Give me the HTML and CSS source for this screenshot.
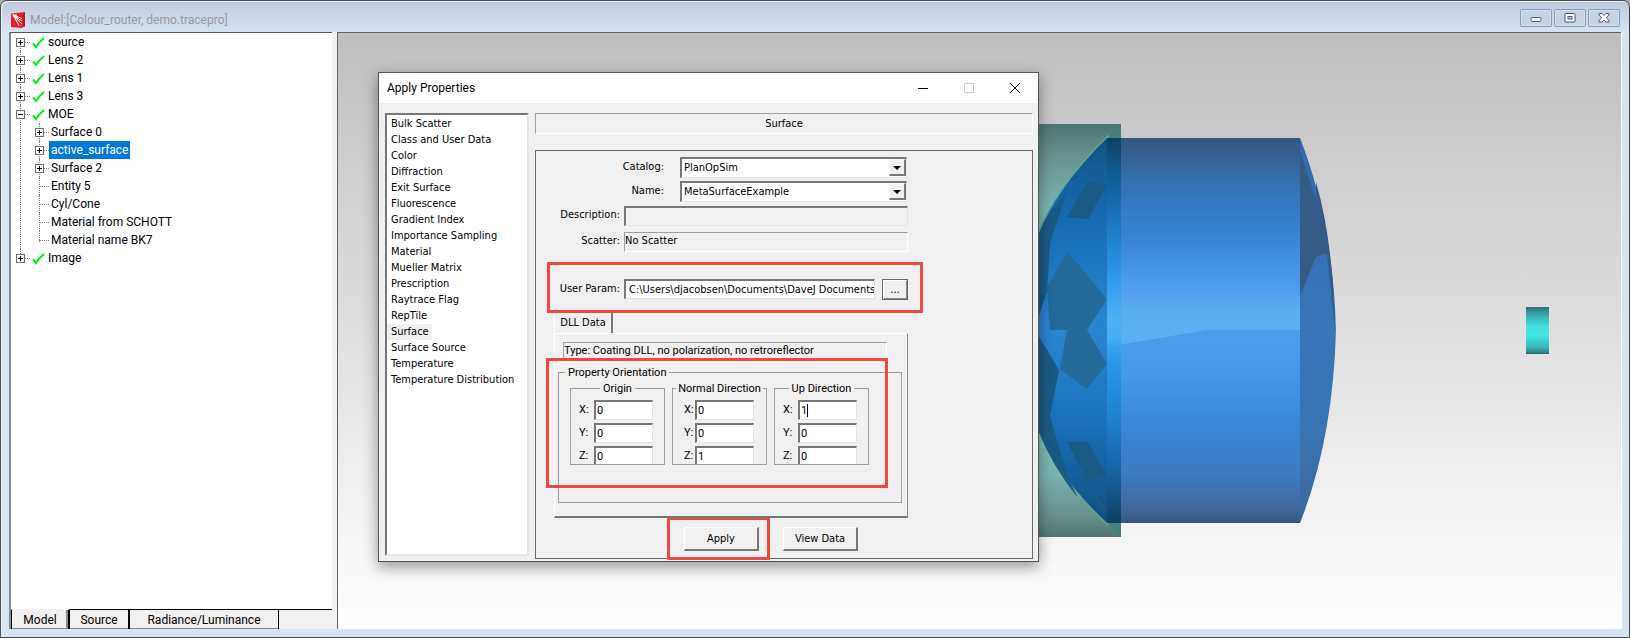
FILE: index.html
```
<!DOCTYPE html>
<html lang="en">
<head>
<meta charset="utf-8">
<title>Model:[Colour_router, demo.tracepro]</title>
<link rel="stylesheet" href="styles.css">
</head>
<body>
<svg width="0" height="0" class="defs" aria-hidden="true">
  <symbol id="check" viewBox="0 0 13 12"><path d="M1 6.5 L4 10 Q7 5 12 1" fill="none" stroke="#00f018" stroke-width="2"/></symbol>
</svg>
<main class="window">
  <header class="titlebar">
    <svg class="logo" width="16" height="16" viewBox="0 0 16 16"><path d="M1 1.500L15 0V14L12 16 1 15z" fill="#e8202c"/><path d="M13 1L15 0V14L13 15z" fill="#b81822"/><path d="M2.500 3L12 12M3 3l6 10.500M3 3l9 6M3 3l9 3.500" stroke="#fff" stroke-width=".9"/><path d="M2.500 2.500h4l1 3-2 1z" fill="#fff"/></svg>
    <h1 class="title">Model:[Colour_router, demo.tracepro]</h1>
    <div class="winbtns">
      <button class="winbtn" aria-label="Minimize"><svg width="12" height="10" viewBox="0 0 12 10"><rect x="1" y="4.500" width="10" height="4" rx="1" fill="#fff" stroke="#54586c"/></svg></button>
      <button class="winbtn" aria-label="Restore"><svg width="12" height="10" viewBox="0 0 12 10"><rect x="1" y=".5" width="10" height="8.500" rx="1" fill="#fff" stroke="#54586c"/><rect x="4" y="3.500" width="4" height="2.500" fill="#cdd9e6" stroke="#54586c"/></svg></button>
      <button class="winbtn" aria-label="Close"><svg width="12" height="10" viewBox="0 0 12 10"><path d="M1 .5h3l2 2 2-2h3v1.500L8.200 4.750 11 7.500V9H8L6 7 4 9H1V7.500l2.800-2.750L1 2z" fill="#fff" stroke="#54586c"/></svg></button>
    </div>
  </header>
  <div class="client">
    <aside class="side">
      <ul class="tree">
        <li><div class="row"><button class="exp plus" aria-label="Expand source"></button><i class="stub"></i><svg class="ck"><use href="#check"/></svg><span>source</span></div></li>
        <li><div class="row"><button class="exp plus" aria-label="Expand Lens 2"></button><i class="stub"></i><svg class="ck"><use href="#check"/></svg><span>Lens 2</span></div></li>
        <li><div class="row"><button class="exp plus" aria-label="Expand Lens 1"></button><i class="stub"></i><svg class="ck"><use href="#check"/></svg><span>Lens 1</span></div></li>
        <li><div class="row"><button class="exp plus" aria-label="Expand Lens 3"></button><i class="stub"></i><svg class="ck"><use href="#check"/></svg><span>Lens 3</span></div></li>
        <li><div class="row"><button class="exp" aria-label="Collapse MOE"></button><i class="stub"></i><svg class="ck"><use href="#check"/></svg><span>MOE</span></div>
          <ul class="sub">
            <li><div class="row"><button class="exp plus" aria-label="Expand Surface 0"></button><i class="stub"></i><span class="leaf">Surface 0</span></div></li>
            <li><div class="row"><button class="exp plus" aria-label="Expand active_surface"></button><i class="stub"></i><span class="leaf selected">active_surface</span></div></li>
            <li><div class="row"><button class="exp plus" aria-label="Expand Surface 2"></button><i class="stub"></i><span class="leaf">Surface 2</span></div></li>
            <li><div class="row"><i class="stub long"></i><span class="leaf">Entity 5</span></div></li>
            <li><div class="row"><i class="stub long"></i><span class="leaf">Cyl/Cone</span></div></li>
            <li><div class="row"><i class="stub long"></i><span class="leaf">Material from SCHOTT</span></div></li>
            <li><div class="row"><i class="stub long"></i><span class="leaf">Material name BK7</span></div></li>
          </ul>
        </li>
        <li><div class="row"><button class="exp plus" aria-label="Expand Image"></button><i class="stub"></i><svg class="ck"><use href="#check"/></svg><span>Image</span></div></li>
      </ul>
      <nav class="tabs">
        <button class="tab active">Model</button><button class="tab">Source</button><button class="tab wide">Radiance/Luminance</button>
      </nav>
    </aside>
    <section class="canvas">
      <svg class="scene" role="img" aria-label="Lens model">
        <defs>
          <linearGradient id="barrel" gradientUnits="userSpaceOnUse" x1="0" y1="138" x2="0" y2="523">
            <stop offset="0" stop-color="#34587f"/><stop offset=".04" stop-color="#365f92"/><stop offset=".1" stop-color="#336ea9"/><stop offset=".17" stop-color="#3479bf"/><stop offset=".28" stop-color="#3b88d6"/><stop offset=".37" stop-color="#4b9aec"/><stop offset=".4" stop-color="#539fee"/><stop offset=".45" stop-color="#5caeee"/><stop offset=".5" stop-color="#5bb0f0"/><stop offset="1" stop-color="#5bb0f0"/>
          </linearGradient>
          <linearGradient id="lower" gradientUnits="userSpaceOnUse" x1="0" y1="330" x2="0" y2="523">
            <stop offset="0" stop-color="#4d9ee8"/><stop offset=".25" stop-color="#4596e8"/><stop offset=".5" stop-color="#3c87d6"/><stop offset=".75" stop-color="#3c7bbf"/><stop offset=".92" stop-color="#40699d"/><stop offset="1" stop-color="#34587f"/>
          </linearGradient>
          <linearGradient id="strip" gradientUnits="userSpaceOnUse" x1="0" y1="138" x2="0" y2="523">
            <stop offset="0" stop-color="#0d4366"/><stop offset=".15" stop-color="#1569a8"/><stop offset=".28" stop-color="#1f85d4"/><stop offset=".4" stop-color="#38a2f0"/><stop offset=".47" stop-color="#4bb2f2"/><stop offset=".52" stop-color="#46aef2"/><stop offset=".55" stop-color="#2f9eeb"/><stop offset=".7" stop-color="#1f86d4"/><stop offset=".85" stop-color="#1668a8"/><stop offset="1" stop-color="#0d4163"/>
          </linearGradient>
          <linearGradient id="dome" gradientUnits="userSpaceOnUse" x1="0" y1="138" x2="0" y2="523">
            <stop offset="0" stop-color="#125384"/><stop offset=".15" stop-color="#1765a5"/><stop offset=".35" stop-color="#1f7ac2"/><stop offset=".5" stop-color="#2a86d0"/><stop offset=".75" stop-color="#1b70b6"/><stop offset="1" stop-color="#114e7e"/>
          </linearGradient>
          <linearGradient id="teal" gradientUnits="userSpaceOnUse" x1="0" y1="124" x2="0" y2="537">
            <stop offset="0" stop-color="#4d7672"/><stop offset=".08" stop-color="#67948f"/><stop offset=".2" stop-color="#7ab5b2"/><stop offset=".3" stop-color="#7fc2be"/><stop offset=".7" stop-color="#80c6c1"/><stop offset=".85" stop-color="#79b3b0"/><stop offset=".95" stop-color="#66908c"/><stop offset="1" stop-color="#52756f"/>
          </linearGradient>
          <linearGradient id="cap" gradientUnits="userSpaceOnUse" x1="0" y1="138" x2="0" y2="523">
            <stop offset="0" stop-color="#326aab"/><stop offset=".5" stop-color="#3876b8"/><stop offset=".75" stop-color="#3a75b4"/><stop offset="1" stop-color="#3c669a"/>
          </linearGradient>
          <linearGradient id="target" x1="0" y1="0" x2="0" y2="1">
            <stop offset="0" stop-color="#2e7377"/><stop offset=".2" stop-color="#37b0b1"/><stop offset=".42" stop-color="#42e0e0"/><stop offset=".6" stop-color="#44e6e4"/><stop offset=".85" stop-color="#38b7b8"/><stop offset=".96" stop-color="#308689"/><stop offset="1" stop-color="#2c6468"/>
          </linearGradient>
        </defs>
        <g transform="translate(-338 -33)">
          <path d="M960 124H1121V537H960z" fill="url(#teal)"/>
          <path d="M1121 124V138H1107zM1121 537V523H1107z" fill="#447f79"/>
          <path d="M1107 138Q1056 188 1038 236V426Q1056 475 1107 523z" fill="url(#dome)" stroke="#5da79f" stroke-width="3"/>
          <path d="M1107 138Q1056 188 1038 236V426Q1056 475 1107 523z" fill="url(#dome)"/>
          <g fill="#1a5a86">
            <path d="M1084 165L1070 181 1076 179zM1067 192L1050 243 1047 292 1038 318V236Q1048 210 1067 192z"/>
            <path d="M1088 181L1107 185 1088 219 1067 217zM1067 442H1088L1107 476 1087 480z"/>
            <path d="M1038 335L1059 370 1050 416 1067 475 1078 498Q1052 466 1038 430zM1092 487L1107 512 1098 505z"/>
          </g>
          <path d="M1067 251L1107 299 1087 330 1107 364 1087 389 1060 369 1067 330H1050L1047 288z" fill="#246a9b"/>
          <path d="M1107 138H1300V523H1107z" fill="url(#barrel)"/>
          <path d="M1107 347L1206 330H1300V523H1107z" fill="url(#lower)"/>
          <path d="M1107 138H1121V523H1107z" fill="url(#strip)"/>
          <path d="M1107 347L1121 345V352L1107 354z" fill="#329ff0"/>
          <path d="M1300 138Q1333 222 1336 330 Q1333 440 1300 523z" fill="url(#cap)"/>
          <path d="M1300 151L1316 200 1316 182Q1333 240 1335 330L1327 254 1323 254 1316 257 1300 296z" fill="#355c86"/>
          <rect x="1526" y="307" width="23" height="47" fill="url(#target)"/>
        </g>
      </svg>
      <form class="dialog">
        <header class="dlg-title">
          <h2>Apply Properties</h2>
          <button type="button" class="cap" aria-label="Minimize"><svg width="12" height="12"><path d="M1 6.500H11" stroke="#000"/></svg></button>
          <button type="button" class="cap" aria-label="Maximize" disabled><svg width="12" height="12"><path d="M1.500 1.500H10.500V10.500H1.500z" fill="none" stroke="#ccc"/></svg></button>
          <button type="button" class="cap" aria-label="Close"><svg width="12" height="12"><path d="M1 1L11 11M11 1L1 11" stroke="#000"/></svg></button>
        </header>
        <div class="dlg-body">
          <ul class="proplist">
            <li>Bulk Scatter</li><li>Class and User Data</li><li>Color</li><li>Diffraction</li><li>Exit Surface</li><li>Fluorescence</li><li>Gradient Index</li><li>Importance Sampling</li><li>Material</li><li>Mueller Matrix</li><li>Prescription</li><li>Raytrace Flag</li><li>RepTile</li><li><span class="cur">Surface</span></li><li>Surface Source</li><li>Temperature</li><li>Temperature Distribution</li>
          </ul>
          <div class="main">
            <h3 class="banner">Surface</h3>
            <div class="panel">
              <div class="field narrow"><label for="cat">Catalog:</label><div class="combo"><select id="cat"><option>PlanOpSim</option></select><i class="arrow"></i></div></div>
              <div class="field narrow second"><label for="nam">Name:</label><div class="combo"><select id="nam"><option>MetaSurfaceExample</option></select><i class="arrow"></i></div></div>
              <div class="field desc"><label for="des">Description:</label><input id="des" class="sunk gray" readonly></div>
              <div class="field scat"><label for="sca">Scatter:</label><output id="sca" class="flat">No Scatter</output></div>
              <div class="callout param">
                <div class="field"><label for="par">User Param:</label><input id="par" class="sunk path" value="C:\Users\djacobsen\Documents\DaveJ Documents\"><button type="button" class="btn dots">...</button></div>
              </div>
              <div class="tabwrap">
                <button type="button" class="dlltab">DLL Data</button>
                <div class="page">
                  <p class="flat type">Type: Coating DLL, no polarization, no retroreflector</p>
                  <fieldset class="group orient">
                    <legend>Property Orientation</legend>
                    <div class="vectors">
                      <fieldset class="group vec"><legend>Origin</legend>
                        <label><span>X:</span><input class="sunk" value="0"></label>
                        <label><span>Y:</span><input class="sunk" value="0"></label>
                        <label><span>Z:</span><input class="sunk" value="0"></label>
                      </fieldset>
                      <fieldset class="group vec tight"><legend>Normal Direction</legend>
                        <label><span>X:</span><input class="sunk" value="0"></label>
                        <label><span>Y:</span><input class="sunk" value="0"></label>
                        <label><span>Z:</span><input class="sunk" value="1"></label>
                      </fieldset>
                      <fieldset class="group vec up"><legend>Up Direction</legend>
                        <label class="editing"><span>X:</span><input class="sunk" value="1"></label>
                        <label><span>Y:</span><input class="sunk" value="0"></label>
                        <label><span>Z:</span><input class="sunk" value="0"></label>
                      </fieldset>
                    </div>
                  </fieldset>
                  <i class="mark"></i>
                </div>
              </div>
              <div class="actions">
                <div class="callout apply"><button type="button" class="btn">Apply</button></div>
                <button type="button" class="btn">View Data</button>
              </div>
            </div>
          </div>
        </div>
      </form>
    </section>
  </div>
</main>
</body>
</html>
```
FILE: styles.css
```
* { box-sizing: border-box; }
body { margin: 0; background: #aaa; font: 12px/18px Roboto, sans-serif; color: #000; }
button, input, select { font: inherit; color: inherit; margin: 0; padding: 0; border-radius: 0; }
ul { list-style: none; margin: 0; padding: 0; }
h1, h2, h3, p { margin: 0; font: inherit; }
.defs { position: absolute; }

.window { height: 100vh; display: flex; flex-direction: column; padding: 0 8px 8px; border: 1px solid #4c4a50; border-radius: 7px 7px 0 0; background: linear-gradient(#bccada, #d7e4f2 32px); box-shadow: inset 1px 1px #e8f0f8; }
.titlebar { display: flex; align-items: center; height: 31px; padding: 6px 1px 0 1px; }
.title { flex: 1; padding-left: 4px; color: #98999c; }
.winbtns { display: flex; gap: 2px; padding-bottom: 4px; }
.winbtn { width: 32px; height: 18px; display: grid; place-items: center; border: 1px solid #8b9bb9; border-radius: 2px; background: #c4d2e2; box-shadow: inset 0 0 0 1px #d3dfec; }

.client { flex: 1; min-height: 0; display: flex; gap: 5px; background: #f0f0f0; }
.side { width: 323px; display: flex; flex-direction: column; border: solid #888; border-width: 1px 0 0 2px; border-top-color: #555; background: #fff; }
.tree { flex: 1; padding: 0 0 0 5px; }
.tree li { position: relative; }
.tree li::before { content: ""; position: absolute; left: 4px; top: 0; bottom: 0; border-left: 1px dotted #808080; }
.tree > li:first-child::before { top: 10px; }
.tree li:last-child::before { bottom: auto; height: 11px; }
.row { display: flex; align-items: center; height: 18px; }
.exp { position: relative; flex: none; width: 9px; height: 9px; margin-top: 1px; border: 1px solid #707070; background: #fff; }
.exp::before, .exp.plus::after { content: ""; position: absolute; left: 1px; top: 3px; width: 5px; height: 1px; background: #000; }
.exp.plus::after { left: 3px; top: 1px; width: 1px; height: 5px; }
.stub { width: 5px; border-top: 1px dotted #808080; }
.stub.long { width: 10px; margin-left: 4px; }
.ck { width: 13px; height: 12px; margin: 2px 1px 0 2px; }
.row > span { padding: 0 2px; }
.sub { padding-left: 19px; }
.selected { background: #0078d7; color: #fff; }
.tabs { display: flex; height: 20px; background: #f0f0f0; }
.tab { width: 60px; border: solid #000; border-width: 1px 2px 0 0; background: #f0f0f0; box-shadow: inset 0 -1px #888; }
.tab.wide { width: 149px; border-right-width: 1px; }
.tab.active { width: 59px; border-top-color: #f0f0f0; border-left: 1px solid #000; box-shadow: inset -2px -1px #888; }
.tabs::after { content: ""; flex: 1; border-top: 1px solid #000; }

.canvas { flex: 1; position: relative; border: solid #666; border-width: 1px 0 0 1px; background: linear-gradient(#bfbfbf, #fff); box-shadow: 1px 0 #fff; }
.scene { display: block; position: absolute; width: 100%; height: 100%; }

.dialog { position: absolute; left: 40px; top: 39px; width: 661px; border: 1px solid #555; background: #f0f0f0; box-shadow: 0 5px 14px rgba(0,0,0,.4); font: 11px/16px "DejaVu Sans Condensed", sans-serif; }
.dlg-title { display: flex; align-items: center; height: 30px; padding: 0 17px 0 8px; background: #fff; }
.dlg-title h2 { flex: 1; font: 12px/18px Roboto, sans-serif; }
.cap { width: 12px; height: 12px; margin-left: 34px; border: 0; background: none; }
.cap svg { display: block; }
.dlg-body { display: flex; gap: 6px; padding: 10px 5px 2px 6px; }
.proplist { width: 144px; margin-bottom: 3px; padding: 1px 0 0 4px; border: solid; border-width: 2px; border-color: #777 #e6e6e6 #e6e6e6 #777; background: #fff; }
.cur { display: inline-block; margin-left: -4px; padding: 0 3px 0 4px; background: #f0f0f0; }
.main { flex: 1; }
.banner { height: 21px; padding-top: 1px; line-height: 18px; border: 1px solid; border-color: #a0a0a0 #fff #fff #a0a0a0; text-align: center; }
.panel { margin-top: 16px; height: 409px; border: 1px solid #696969; padding: 6px 0 0 18px; }
.field { display: flex; width: 354px; }
.field label { width: 66px; margin-right: 4px; padding-top: 1px; text-align: right; white-space: nowrap; }
.field.narrow label { width: 110px; margin-right: 16px; padding-top: 2px; }
.second { margin-top: 3px; }
.combo { flex: 1; position: relative; height: 21px; margin-right: 1px; border: solid; border-width: 2px 1px 1px 2px; border-color: #777 #e3e3e3 #e3e3e3 #777; background: #fff; }
.combo select { appearance: none; width: 100%; height: 18px; border: 0; padding-left: 2px; background: none; }
.arrow { position: absolute; right: 0; top: 0; width: 17px; height: 17px; border: solid; border-width: 1px 2px 2px 1px; border-color: #f8f8f8 #777 #777 #f8f8f8; background: #f0f0f0; pointer-events: none; }
.arrow::after { content: ""; position: absolute; left: 3px; top: 6px; border: solid transparent; border-width: 4px 4px 0; border-top-color: #000; }
.sunk { border: solid; border-width: 2px 1px 1px 2px; border-color: #777 #e3e3e3 #e3e3e3 #777; background: #fff; outline: none; }
.gray { background: #f0f0f0; }
.desc { margin-top: 4px; }
.scat { margin-top: 6px; }
.field > input, .field > output { flex: 1; min-width: 0; height: 20px; }
.flat { border: 1px solid; border-color: #a0a0a0 #fff #fff #a0a0a0; }
.callout { border: 3px solid #eb4a43; }
.param { position: relative; width: 376px; height: 51px; margin: 10px 0 0 -7px; padding: 14px 0 0 4px; }
.param label { padding-top: 2px; }
.param .path { padding-left: 3px; }
.btn { width: 75px; height: 24px; border: solid; border-width: 1px 2px 2px 1px; border-color: #fff #777 #777 #fff; background: #f0f0f0; }
.dots { width: 26px; height: 21px; margin-left: 7px; border: 1px solid #666; box-shadow: inset 1px 1px #fff, inset -1px -1px #888; line-height: 14px; }
.tabwrap { width: 354px; }
.dlltab { display: block; width: 59px; height: 20px; border: solid; border-width: 0 2px 0 1px; border-color: #fff #777 #fff #fff; background: #f0f0f0; }
.page { position: relative; height: 185px; border: solid; border-width: 1px 1px 2px; border-color: #fff #888 #777 #fff; padding: 8px 5px 0 3px; font: 11px/13px Roboto, sans-serif; }
.type { width: 324px; height: 17px; margin-left: 5px; padding: 1px 0; white-space: nowrap; }
.group { min-width: 0; margin: 0; border: 1px solid #a0a0a0; }
.group > legend { padding: 0 3px; }
.orient { height: 137px; margin-top: 7px; padding: 3px 0 0 11px; }
.orient > legend { margin-left: -5px; }
.vectors { display: flex; gap: 7px; }
.vec { width: 95px; height: 83px; padding: 5px 0 0; overflow: hidden; }
.vec > legend { margin: 0 auto; white-space: nowrap; }
.vec label { display: flex; height: 20px; margin: 0 11px 3px 8px; line-height: 20px; }
.vec span { width: 15px; }
.vec input { flex: 1; min-width: 0; padding-left: 1px; }
.vec.tight label { margin-left: 11px; margin-right: 12px; }
.vec.tight > legend { padding: 0 2px; }
.vec.tight span { width: 11px; }
.editing { position: relative; }
.editing::after { content: ""; position: absolute; left: 24px; top: 4px; width: 1px; height: 13px; background: #000; }
.mark { position: absolute; left: -9px; top: 24px; width: 342px; height: 130px; border: 3px solid #eb4a43; }
.actions { display: flex; gap: 13px; padding-left: 113px; }
.apply { width: 103px; height: 43px; margin-top: -1px; padding: 7px 0 0 14px; }
.actions > .btn { margin-top: 9px; }
```
